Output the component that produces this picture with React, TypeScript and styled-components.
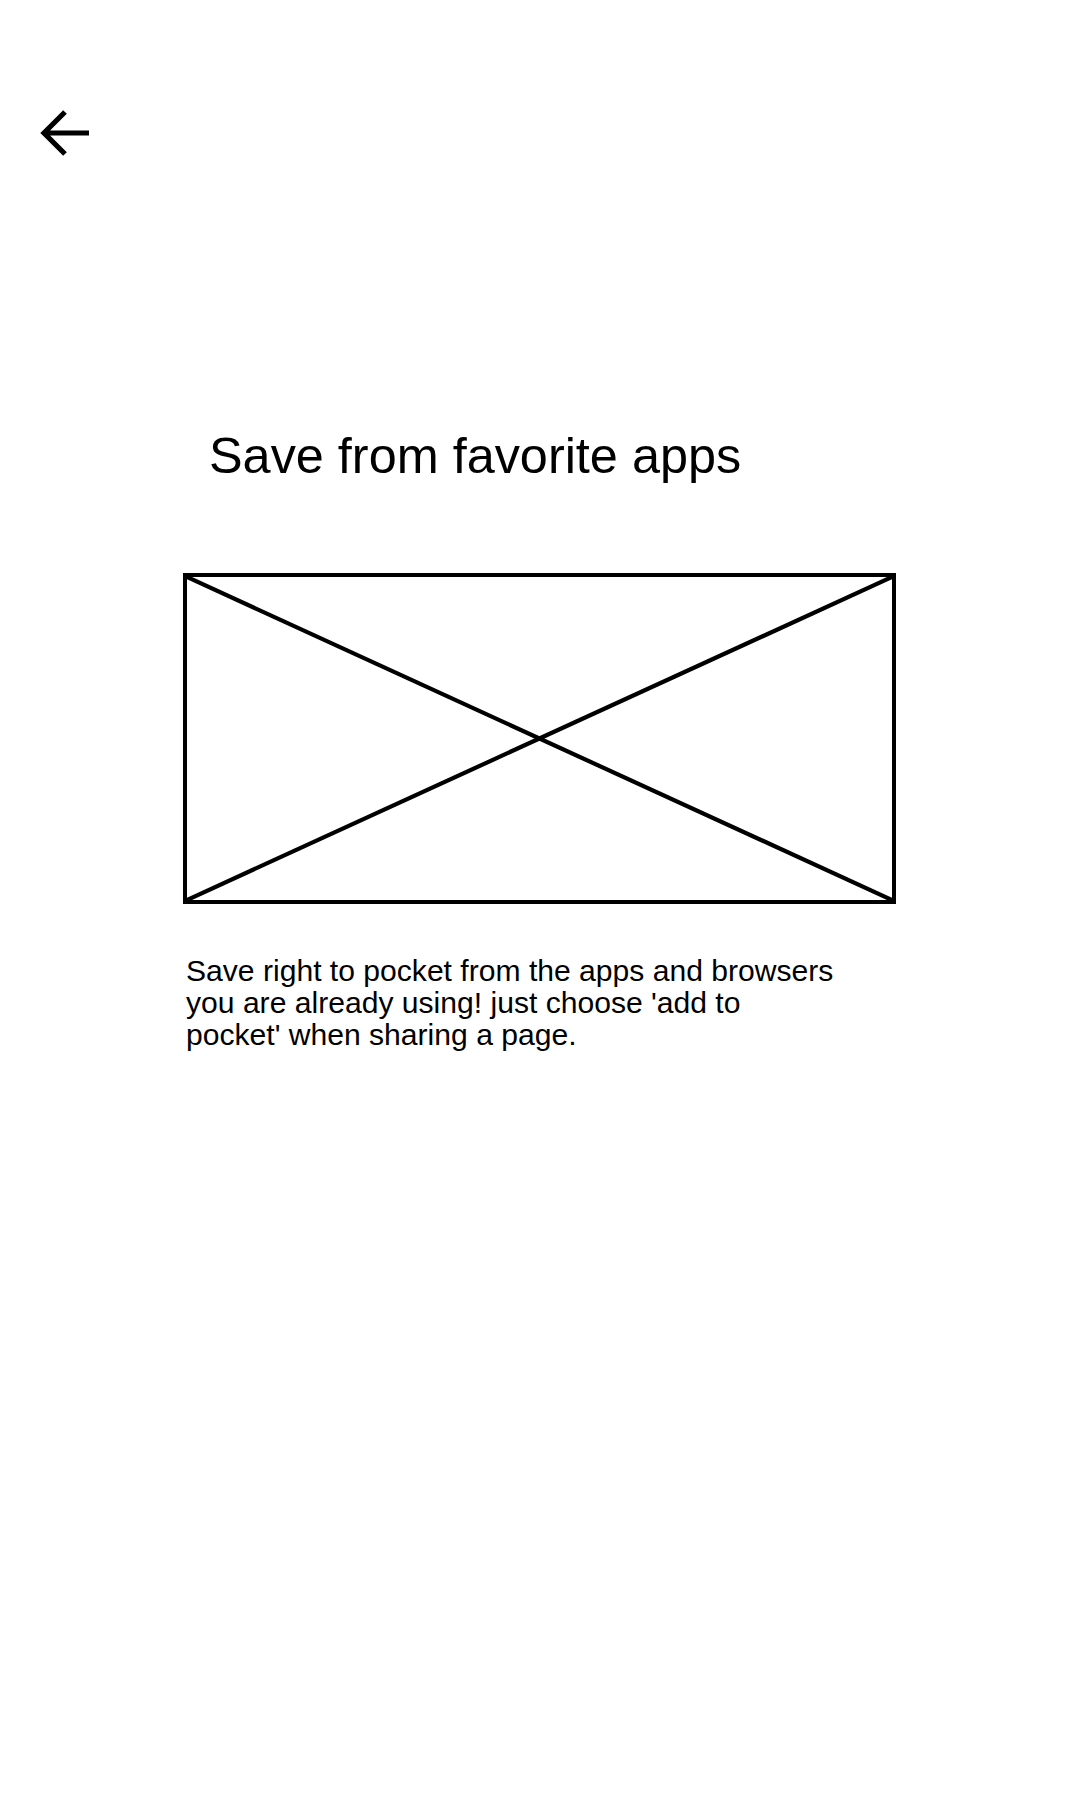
import React from 'react';
import styled, { createGlobalStyle } from 'styled-components';

const GlobalStyle = createGlobalStyle`
  html, body {
    margin: 0;
    padding: 0;
    background: #ffffff;
  }
  body {
    font-family: "Liberation Sans", Arial, sans-serif;
    color: #000000;
  }
`;

const Screen = styled.div`
  width: 1080px;
  min-height: 1800px;
  background: #ffffff;
  display: flex;
  flex-direction: column;
`;

const Header = styled.header`
  display: flex;
  align-items: center;
  padding: 105px 0 0 38px;
  height: 56px;
`;

const BackButton = styled.button`
  display: flex;
  align-items: center;
  justify-content: center;
  width: 56px;
  height: 56px;
  padding: 0;
  border: none;
  background: transparent;
  cursor: pointer;
`;

const Content = styled.main`
  display: flex;
  flex-direction: column;
  padding: 266px 0 0 183px;
`;

const Title = styled.h1`
  margin: 0 0 0 26px;
  font-size: 50.4px;
  line-height: 58px;
  font-weight: 400;
`;

const Placeholder = styled.div`
  margin-top: 88px;
  width: 713px;
  height: 331px;
  box-sizing: border-box;
  border: 4.5px solid #000000;

  svg {
    display: block;
    width: 100%;
    height: 100%;
  }
`;

const Description = styled.p`
  margin: 51px 0 0 3px;
  width: 652px;
  font-size: 30.1px;
  line-height: 32px;
`;

const BackArrow = () => (
  <svg width="56" height="56" viewBox="0 0 56 56" fill="none">
    <path
      d="M27 11 L6 32 L27 53 M6 32 L51 32"
      stroke="#000"
      strokeWidth="5.2"
      strokeLinecap="butt"
      strokeLinejoin="miter"
      transform="translate(0 -4)"
    />
  </svg>
);

const App: React.FC = () => (
  <>
    <GlobalStyle />
    <Screen>
      <Header>
        <BackButton aria-label="Back">
          <BackArrow />
        </BackButton>
      </Header>

      <Content>
        <Title>Save from favorite apps</Title>

        <Placeholder>
          <svg viewBox="0 0 704 322" preserveAspectRatio="none">
            <line x1="0" y1="0" x2="704" y2="322" stroke="#000" strokeWidth="4.2" />
            <line x1="704" y1="0" x2="0" y2="322" stroke="#000" strokeWidth="4.2" />
          </svg>
        </Placeholder>

        <Description>
          Save right to pocket from the apps and browsers you are already using! just choose 'add to pocket' when sharing a page.
        </Description>
      </Content>
    </Screen>
  </>
);

export default App;
